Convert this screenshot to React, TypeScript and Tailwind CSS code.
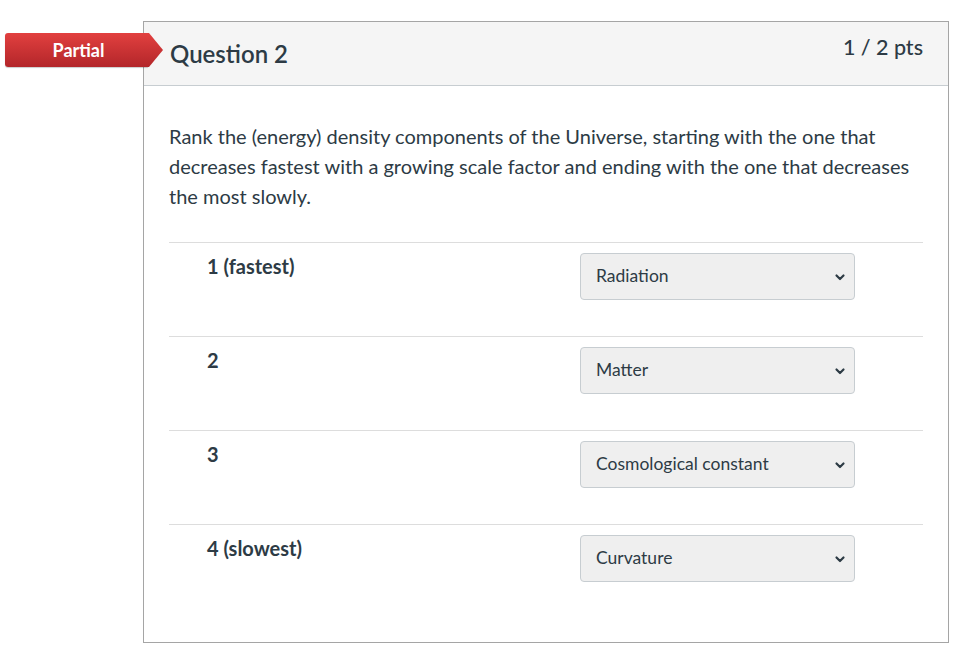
import React from "react";

const rows = [
  { label: "1 (fastest)", value: "Radiation" },
  { label: "2", value: "Matter" },
  { label: "3", value: "Cosmological constant" },
  { label: "4 (slowest)", value: "Curvature" },
];

function Chevron() {
  return (
    <svg width="12" height="12" viewBox="0 0 12 12" className="text-[#2d3b45]">
      <path d="M2.5 4.5 L6 8 L9.5 4.5" fill="none" stroke="currentColor" strokeWidth="2.2" strokeLinecap="round" strokeLinejoin="round" />
    </svg>
  );
}

export default function App() {
  return (
    <div className="w-[967px] h-[660px] bg-white relative" style={{ fontFamily: "Lato, 'Noto Sans', sans-serif" }}>
      <div className="pt-[21px] pl-[143px] pr-[18px]">
        <div className="relative border border-[#a5a5a5] h-[622px] w-[806px]">
          <div className="h-[64px] bg-[#f5f5f5] border-b border-[#c7cdd1] flex items-start justify-between pl-[26px] pr-[25px]">
            <div className="text-[24px] text-[#2d3b45] font-semibold mt-[16px] leading-[32px]">Question 2</div>
            <div className="text-[21.5px] text-[#2d3b45] font-medium mt-[11px] leading-[28px]">1 / 2 pts</div>
          </div>
          <div className="px-[25px] pt-[35px]">
            <p className="text-[20px] leading-[30px] text-[#2d3b45]">
              Rank the (energy) density components of the Universe, starting with the one that decreases fastest with a growing scale factor and ending with the one that decreases the most slowly.
            </p>
            <div className="mt-[31px]">
              {rows.map((r, i) => (
                <div key={i} className="h-[94px] border-t border-[#dddddd] flex items-start">
                  <div className="w-[411px] pl-[38px] pt-[10px] text-[20px] leading-[26px] font-bold text-[#2d3b45]">{r.label}</div>
                  <div className="mt-[10px] w-[275px] h-[47px] rounded-[4px] border border-[#c7cdd1] bg-[#efefef] flex items-center justify-between pl-[15px] pr-[8px] text-[17.5px] text-[#2d3b45]">
                    <span>{r.value}</span>
                    <Chevron />
                  </div>
                </div>
              ))}
            </div>
          </div>
        </div>
      </div>
      <div className="absolute left-[5px] top-[33px] h-[34px] flex">
        <div className="w-[143px] h-[34px] rounded-l-[3px] bg-gradient-to-b from-[#e2403f] to-[#b3262a] text-white font-bold text-[18px] flex items-center justify-center pl-[4px] shadow-[0_1px_1px_rgba(0,0,0,0.2)]">
          Partial
        </div>
        <svg width="16" height="34" viewBox="0 0 16 34">
          <defs>
            <linearGradient id="g" x1="0" y1="0" x2="0" y2="1">
              <stop offset="0" stopColor="#e2403f" />
              <stop offset="1" stopColor="#b3262a" />
            </linearGradient>
          </defs>
          <path d="M0 0 L1 0 L15 17 L1 34 L0 34 Z" fill="url(#g)" />
        </svg>
      </div>
    </div>
  );
}
